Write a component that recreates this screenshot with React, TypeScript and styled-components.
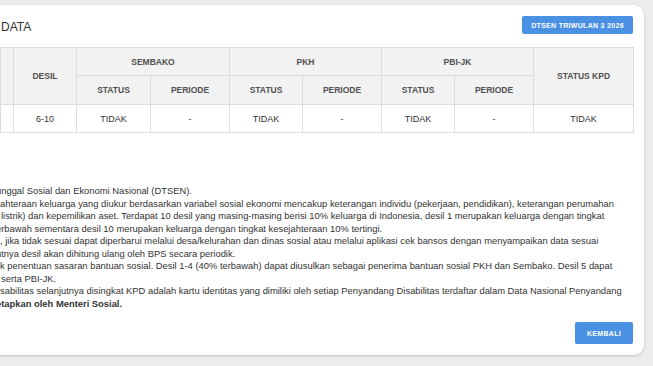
import React from "react";
import styled, { createGlobalStyle } from "styled-components";

const GlobalStyle = createGlobalStyle`
  html, body {
    margin: 0;
    padding: 0;
    background: #ececec;
    overflow: hidden;
    font-family: "Liberation Sans", Arial, sans-serif;
    color: #333;
  }
`;

const Page = styled.div`
  width: 653px;
  height: 366px;
  box-sizing: border-box;
  padding: 5px 9px 0 0;
  overflow: hidden;
`;

const Card = styled.div`
  margin-left: -11px;
  height: 350px;
  box-sizing: border-box;
  background: #fff;
  border-radius: 10px;
  box-shadow: 0 1px 3px rgba(0, 0, 0, 0.18);
  padding: 11px;
  display: flex;
  flex-direction: column;
`;

const HeaderBar = styled.div`
  display: flex;
  align-items: center;
  justify-content: space-between;
  height: 18px;
`;

const Title = styled.div`
  font-size: 12px;
  color: #333;
  margin-top: 4px;
  margin-left: 1px;
`;

const Button = styled.button<{ $w: number; $h: number }>`
  border: none;
  border-radius: 2px;
  background: #4a91e4;
  color: #fff;
  font-family: "Liberation Sans", Arial, sans-serif;
  font-weight: bold;
  font-size: 7px;
  letter-spacing: 0.3px;
  padding: 0;
  height: ${(p) => p.$h}px;
  width: ${(p) => p.$w}px;
  display: flex;
  align-items: center;
  justify-content: center;
`;

const Table = styled.table`
  margin-top: 13px;
  width: 633px;
  border-collapse: collapse;
  table-layout: fixed;
`;

const HeadCell = styled.th<{ $h: number }>`
  background: #f2f2f2;
  border: 1px solid #dcdcdc;
  height: ${(p) => p.$h}px;
  padding: 0;
  font-size: 8.5px;
  font-weight: bold;
  color: #505050;
  text-align: center;
  box-sizing: border-box;
`;

const BodyCell = styled.td`
  border: 1px solid #dcdcdc;
  height: 28px;
  padding: 0;
  font-size: 9px;
  text-align: center;
  color: #333;
  box-sizing: border-box;
`;

const Notes = styled.div`
  margin-top: 52px;
  font-size: 9.4px;
  line-height: 12.5px;
  color: #333;
`;

const Line = styled.div<{ $shift: number; $bold?: boolean }>`
  white-space: nowrap;
  margin-left: ${(p) => p.$shift}px;
  font-weight: ${(p) => (p.$bold ? "bold" : "normal")};
`;

const Footer = styled.div`
  margin-top: auto;
  display: flex;
  justify-content: flex-end;
`;

const lines: { t: string; s: number; b?: boolean }[] = [
  { t: "unggal Sosial dan Ekonomi Nasional (DTSEN).", s: -4 },
  {
    t: "ahteraan keluarga yang diukur berdasarkan variabel sosial ekonomi mencakup keterangan individu (pekerjaan, pendidikan), keterangan perumahan",
    s: 0,
  },
  {
    t: "listrik) dan kepemilikan aset. Terdapat 10 desil yang masing-masing berisi 10% keluarga di Indonesia, desil 1 merupakan keluarga dengan tingkat",
    s: 1,
  },
  { t: "erbawah sementara desil 10 merupakan keluarga dengan tingkat kesejahteraan 10% tertingi.", s: -4 },
  {
    t: ", jika tidak sesuai dapat diperbarui melalui desa/kelurahan dan dinas sosial atau melalui aplikasi cek bansos dengan menyampaikan data sesuai",
    s: 0,
  },
  { t: "utnya desil akan dihitung ulang oleh BPS secara periodik.", s: -4 },
  {
    t: "k penentuan sasaran bantuan sosial. Desil 1-4 (40% terbawah) dapat diusulkan sebagai penerima bantuan sosial PKH dan Sembako. Desil 5 dapat",
    s: 0,
  },
  { t: "serta PBI-JK.", s: 1 },
  {
    t: "sabilitas selanjutnya disingkat KPD adalah kartu identitas yang dimiliki oleh setiap Penyandang Disabilitas terdaftar dalam Data Nasional Penyandang",
    s: 0,
  },
  { t: "etapkan oleh Menteri Sosial.", s: -4, b: true },
];

export default function App() {
  return (
    <>
      <GlobalStyle />
      <Page>
        <Card>
          <HeaderBar>
            <Title>DATA</Title>
            <Button $w={111} $h={18}>DTSEN TRIWULAN 3 2026</Button>
          </HeaderBar>
          <Table>
            <colgroup>
              <col style={{ width: 13 }} />
              <col style={{ width: 63 }} />
              <col style={{ width: 74 }} />
              <col style={{ width: 79 }} />
              <col style={{ width: 73 }} />
              <col style={{ width: 79 }} />
              <col style={{ width: 73 }} />
              <col style={{ width: 79 }} />
              <col style={{ width: 100 }} />
            </colgroup>
            <thead>
              <tr>
                <HeadCell $h={28} rowSpan={2}></HeadCell>
                <HeadCell $h={28} rowSpan={2}>DESIL</HeadCell>
                <HeadCell $h={28} colSpan={2}>SEMBAKO</HeadCell>
                <HeadCell $h={28} colSpan={2}>PKH</HeadCell>
                <HeadCell $h={28} colSpan={2}>PBI-JK</HeadCell>
                <HeadCell $h={28} rowSpan={2}>STATUS KPD</HeadCell>
              </tr>
              <tr>
                <HeadCell $h={29}>STATUS</HeadCell>
                <HeadCell $h={29}>PERIODE</HeadCell>
                <HeadCell $h={29}>STATUS</HeadCell>
                <HeadCell $h={29}>PERIODE</HeadCell>
                <HeadCell $h={29}>STATUS</HeadCell>
                <HeadCell $h={29}>PERIODE</HeadCell>
              </tr>
            </thead>
            <tbody>
              <tr>
                <BodyCell></BodyCell>
                <BodyCell>6-10</BodyCell>
                <BodyCell>TIDAK</BodyCell>
                <BodyCell>-</BodyCell>
                <BodyCell>TIDAK</BodyCell>
                <BodyCell>-</BodyCell>
                <BodyCell>TIDAK</BodyCell>
                <BodyCell>-</BodyCell>
                <BodyCell>TIDAK</BodyCell>
              </tr>
            </tbody>
          </Table>
          <Notes>
            {lines.map((l, i) => (
              <Line key={i} $shift={l.s} $bold={l.b}>
                {l.t}
              </Line>
            ))}
          </Notes>
          <Footer>
            <Button $w={58} $h={22}>KEMBALI</Button>
          </Footer>
        </Card>
      </Page>
    </>
  );
}
